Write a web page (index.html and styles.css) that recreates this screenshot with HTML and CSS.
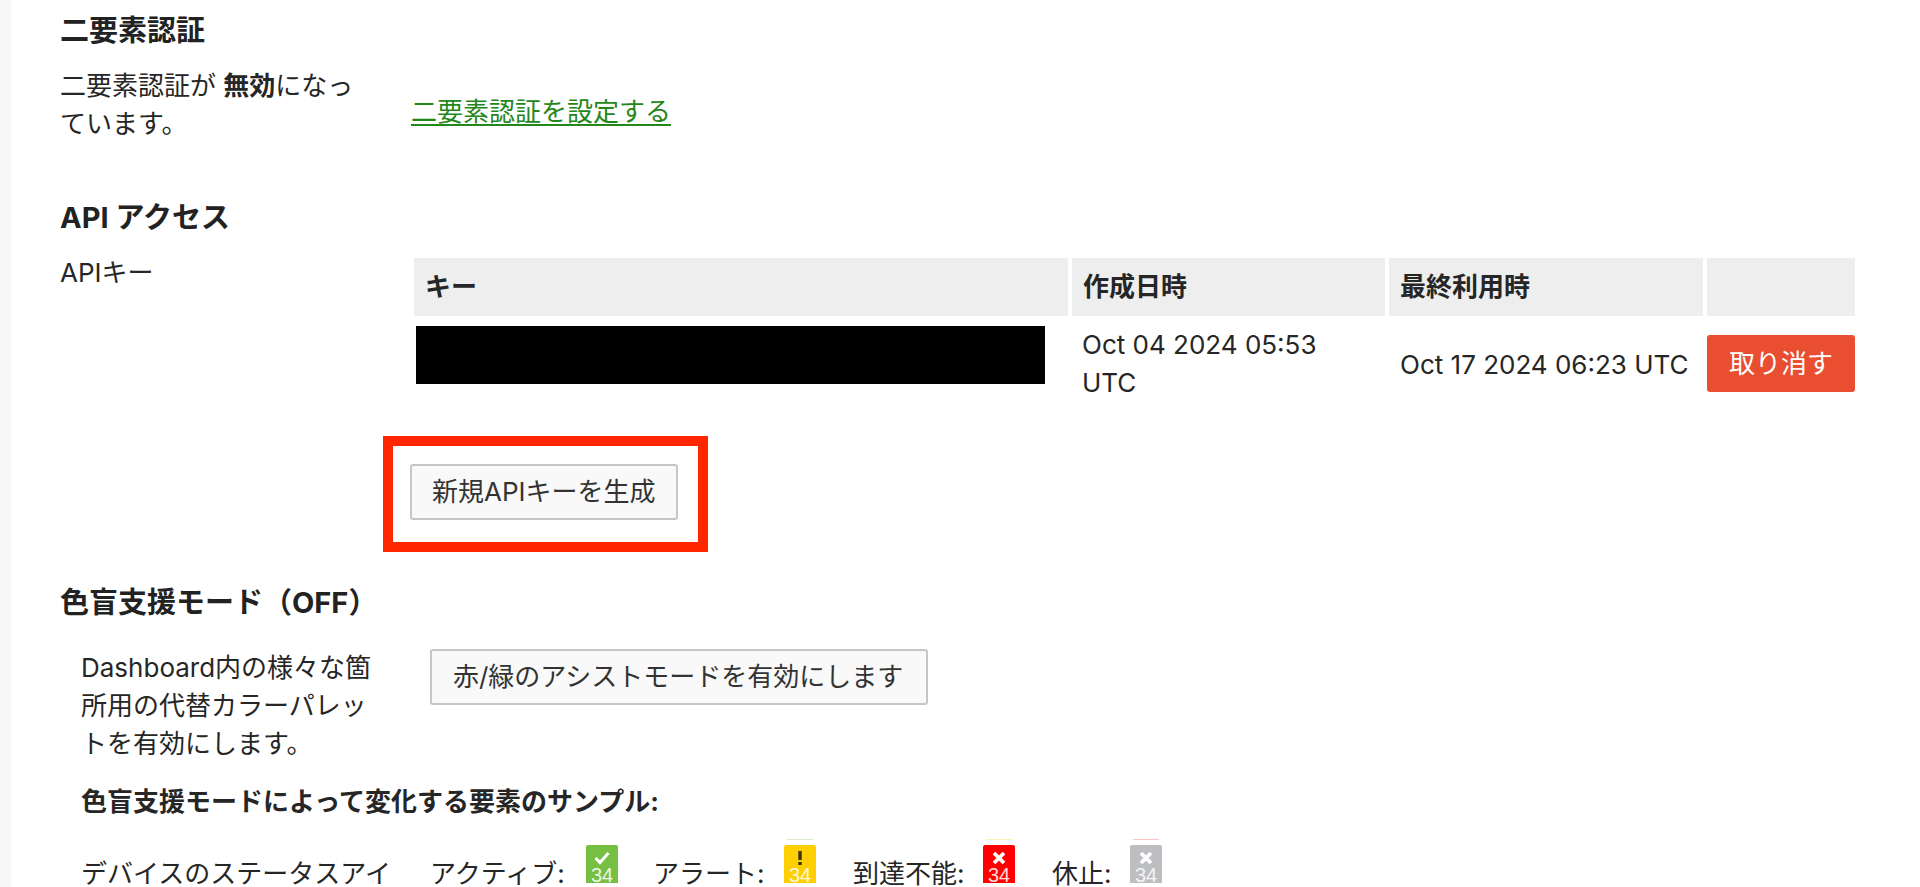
FILE: index.html
```html
<!DOCTYPE html>
<html lang="ja">
<head>
<meta charset="utf-8">
<title>プロフィール</title>
<link rel="stylesheet" href="styles.css">
</head>
<body>
<div class="page">
  <div class="rail"></div>
  <main class="content">
    <section class="two-factor">
      <h2 class="heading">二要素認証</h2>
      <div class="row">
        <p class="desc">二要素認証が <strong>無効</strong>になっています。</p>
        <a class="link" href="#">二要素認証を設定する</a>
      </div>
    </section>

    <section class="api">
      <h2 class="heading">API アクセス</h2>
      <div class="row api-row">
        <p class="desc">APIキー</p>
        <div class="api-main">
          <table class="keys">
            <colgroup>
              <col class="col-key"><col class="col-date"><col class="col-date2"><col class="col-act">
            </colgroup>
            <thead>
              <tr><th>キー</th><th>作成日時</th><th>最終利用時</th><th></th></tr>
            </thead>
            <tbody>
              <tr>
                <td class="key-cell"><div class="redacted"></div></td>
                <td class="date-cell">Oct 04 2024 05:53 UTC</td>
                <td class="date-cell mid">Oct 17 2024 06:23 UTC</td>
                <td class="act-cell"><button class="btn-danger" type="button">取り消す</button></td>
              </tr>
            </tbody>
          </table>
          <div class="callout">
            <button class="btn btn-new" type="button">新規APIキーを生成</button>
          </div>
        </div>
      </div>
    </section>

    <section class="assist">
      <h2 class="heading">色盲支援モード（OFF）</h2>
      <div class="assist-body">
        <div class="row">
          <p class="desc">Dashboard内の様々な箇所用の代替カラーパレットを有効にします。</p>
          <div><button class="btn btn-assist" type="button">赤/緑のアシストモードを有効にします</button></div>
        </div>
        <p class="sample-title">色盲支援モードによって変化する要素のサンプル:</p>
        <div class="row sample-row">
          <p class="desc sample-label">デバイスのステータスアイコン</p>
          <div class="statuses">
            <span class="status-label">アクティブ:</span>
            <div class="dev dev-green">
              <svg class="glyph" viewBox="0 0 16 16"><path d="M1.5 8 6 12.5 14.5 3" fill="none" stroke="#fff" stroke-width="3"/></svg>
              <span class="dev-num">34</span>
            </div>
            <span class="status-label">アラート:</span>
            <div class="dev dev-yellow">
              <svg class="glyph" viewBox="0 0 16 16"><path d="M8 1v9" stroke="#3a3208" stroke-width="3.4" fill="none"/><path d="M8 12v3" stroke="#3a3208" stroke-width="3.4" fill="none"/></svg>
              <span class="dev-num">34</span>
            </div>
            <span class="status-label">到達不能:</span>
            <div class="dev dev-red">
              <svg class="glyph" viewBox="0 0 16 16"><path d="M3 3 13 13M13 3 3 13" stroke="#fff" stroke-width="3.8" fill="none"/></svg>
              <span class="dev-num">34</span>
            </div>
            <span class="status-label">休止:</span>
            <div class="dev dev-grey">
              <svg class="glyph" viewBox="0 0 16 16"><path d="M3 3 13 13M13 3 3 13" stroke="#fff" stroke-width="3.8" fill="none"/></svg>
              <span class="dev-num">34</span>
            </div>
          </div>
        </div>
      </div>
    </section>
  </main>
</div>
</body>
</html>
```
FILE: styles.css
```css
* { box-sizing: border-box; }
html, body { margin: 0; height: 887px; overflow: hidden; background: #fff; }
body {
  font-family: Inter, "Noto Sans CJK JP", sans-serif;
  font-size: 26px;
  line-height: 38px;
  color: #262626;
}
.page { display: flex; height: 887px; overflow: hidden; }
.rail { flex: 0 0 11px; background: #f7f7f7; }
.content { flex: 1; min-width: 0; padding: 12px 0 0 49px; }

.heading { margin: 0 0 17px; font-size: 29px; line-height: 38px; font-weight: 700; color: #222; }
.row { display: grid; grid-template-columns: 351px 1fr; }
.desc { margin: 0; width: 300px; }
.link { justify-self: start; margin-top: 26px; line-height: 38px; height: 38px; color: #24871a; text-underline-offset: 3px; }
.api { margin-top: 56px; }
.api-main { margin-left: -1px; }

.keys { table-layout: fixed; width: 1449px; border-collapse: separate; border-spacing: 4px; }
.col-key { width: 654px; }
.col-date { width: 313px; }
.col-date2 { width: 314px; }
.col-act { width: 148px; }
.keys th { height: 58px; padding: 0 11px; background: #eee; text-align: left; font-weight: 700; }
.keys td { padding: 6px 20px 2px 10px; vertical-align: top; }
.keys td.key-cell { padding: 6px 0 0 2px; }
.keys td.mid { vertical-align: middle; padding: 7px 0 1px 11px; white-space: nowrap; }
.keys td.act-cell { padding: 15px 0 0; }
.redacted { width: 629px; height: 58px; background: #000; }

.btn, .btn-danger { font: inherit; cursor: pointer; }
.btn {
  display: block;
  height: 56px;
  padding: 0 21px;
  background: #f9f9f9;
  border: 2px solid #c6c6c6;
  border-radius: 3px;
  color: #333;
  white-space: nowrap;
}
.btn-new { padding: 0 20px; }
.btn-assist { padding: 0 23px 0 21px; }
.btn-danger {
  display: block;
  width: 148px;
  height: 57px;
  padding: 0;
  background: #e84e2f;
  border: 0;
  border-radius: 3px;
  color: #fff;
}
.callout {
  display: inline-block;
  margin: 28px 0 0 -27px;
  padding: 18px 20px 22px 17px;
  border: 10px solid #ff2600;
}

.assist { margin-top: 32px; }
.assist .heading { margin-bottom: 27px; }
.assist-body { padding-left: 21px; }
.assist-body .row { grid-template-columns: 349px 1fr; }
.sample-title { margin: 20px 0 24px; font-weight: 700; }
.sample-row { align-items: start; }
.sample-label { padding-top: 10px; width: 310px; }
.statuses {
  display: grid;
  grid-template-columns: 156px 67px 131px 69px 130px 69px 78px 32px;
  align-items: start;
}
.status-label { padding-top: 10px; white-space: nowrap; }

.dev {
  position: relative;
  display: flex;
  flex-direction: column;
  align-items: center;
  width: 32px;
  height: 38px;
  border-radius: 2px 2px 0 0;
}
.dev::before {
  content: "";
  position: absolute;
  left: 3px;
  right: 3px;
  top: -6px;
  height: 1px;
}
.dev-green { background: #76bf43; }
.dev-yellow { background: #ffcf00; }
.dev-yellow::before { background: #d8ecc8; }
.dev-red { background: #ff0000; }
.dev-red::before { background: #fff0b8; }
.dev-grey { background: #bdbec2; }
.dev-grey::before { background: #ffc4c4; }
.glyph { display: block; width: 16px; height: 16px; margin-top: 5px; }
.dev-num {
  font-family: "Liberation Sans", sans-serif;
  font-size: 20px;
  line-height: 16px;
  height: 16px;
  margin-top: 1px;
  color: #fff;
  overflow: hidden;
  opacity: .85;
}
```
